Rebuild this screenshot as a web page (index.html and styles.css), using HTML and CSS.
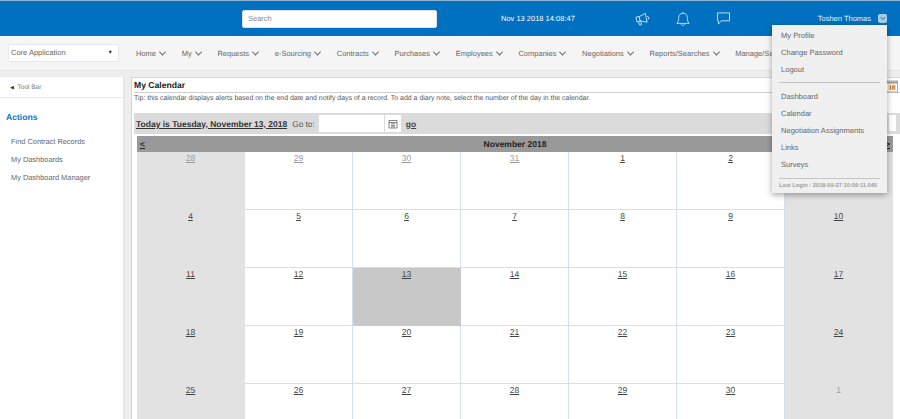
FILE: index.html
```html
<!DOCTYPE html>
<html lang="en">
<head>
<meta charset="utf-8">
<title>My Calendar</title>
<link rel="stylesheet" href="styles.css">
</head>
<body>
<header class="topbar">
  <div class="search">Search</div>
  <div class="clock">Nov 13 2018 14:08:47</div>
  <div class="top-icons">
    <svg class="ticon" width="15" height="14" viewBox="0 0 16 15"><path d="M1 5.5 L4.5 5 L11 1.5 L13 11 L6 9.5 L2 10.5 Z M4.5 5 L5.5 10 M3.5 10.3 L5 14 L7 13.6 L6 9.7 M13 4.5 L15 6 L14 8"/></svg>
    <svg class="ticon" width="14" height="16" viewBox="0 0 16 17"><path d="M1 13.5 C3 11.5 3 9.5 3 7 C3 3.8 5 2 8 2 C11 2 13 3.8 13 7 C13 9.5 13 11.5 15 13.5 Z M8 2 V0.5 M6 14 C6 16.5 10 16.5 10 14"/></svg>
    <svg class="ticon" width="15" height="13" viewBox="0 0 16 14"><path d="M1.5 1 H14.5 V9.5 H5.5 L2.5 13 V9.5 H1.5 Z"/></svg>
  </div>
  <div class="user">
    <span>Toshen Thomas</span>
    <span class="user-toggle"><svg width="8" height="6" viewBox="0 0 8 6"><path d="M1 1 L4 4.5 L7 1"/></svg></span>
  </div>
</header>

<nav class="navbar">
  <div class="app-select"><span>Core Application</span><span class="select-arrow">&#9660;</span></div>
  <ul class="menu">
    <li>Home</li>
    <li>My</li>
    <li>Requests</li>
    <li>e-Sourcing</li>
    <li>Contracts</li>
    <li>Purchases</li>
    <li>Employees</li>
    <li>Companies</li>
    <li>Negotiations</li>
    <li>Reports/Searches</li>
    <li class="cut">Manage/Se</li>
  </ul>
</nav>

<div class="body">
  <aside class="sidebar">
    <div class="toolbar"><span class="tool-arrow">&#9664;</span> Tool Bar</div>
    <h2 class="actions-title">Actions</h2>
    <ul class="actions">
      <li>Find Contract Records</li>
      <li>My Dashboards</li>
      <li>My Dashboard Manager</li>
    </ul>
  </aside>
  <main class="panel">
    <h1 class="panel-title">My Calendar</h1>
    <p class="tip">Tip: this calendar displays alerts based on the end date and notify days of a record. To add a diary note, select the number of the day in the calendar.</p>
    <div class="goto">
      <a class="today">Today is Tuesday, November 13, 2018</a>
      <span class="goto-label">Go to:</span>
      <span class="date-input"></span>
      <span class="date-btn"><svg width="10" height="10" viewBox="0 0 10 10"><path d="M1 1.5 H9 V9 H1 Z M1 3.5 H9 M3 4.8 H7 M3 6.3 H7 M3 7.8 H7"/></svg></span>
      <a class="go">go</a>
    </div>
    <div class="calendar">
      <div class="cal-head"><a>&lt;</a><span>November 2018</span><a>&gt;</a></div>
      <div class="cal-grid">
        <div class="day we"><a class="dim">28</a></div><div class="day"><a class="dim">29</a></div><div class="day"><a class="dim">30</a></div><div class="day"><a class="dim">31</a></div><div class="day"><a>1</a></div><div class="day"><a>2</a></div><div class="day we"><a>3</a></div>
        <div class="day we"><a>4</a></div><div class="day"><a>5</a></div><div class="day"><a>6</a></div><div class="day"><a>7</a></div><div class="day"><a>8</a></div><div class="day"><a>9</a></div><div class="day we"><a>10</a></div>
        <div class="day we"><a>11</a></div><div class="day"><a>12</a></div><div class="day today-cell"><a>13</a></div><div class="day"><a>14</a></div><div class="day"><a>15</a></div><div class="day"><a>16</a></div><div class="day we"><a>17</a></div>
        <div class="day we"><a>18</a></div><div class="day"><a>19</a></div><div class="day"><a>20</a></div><div class="day"><a>21</a></div><div class="day"><a>22</a></div><div class="day"><a>23</a></div><div class="day we"><a>24</a></div>
        <div class="day we"><a>25</a></div><div class="day"><a>26</a></div><div class="day"><a>27</a></div><div class="day"><a>28</a></div><div class="day"><a>29</a></div><div class="day"><a>30</a></div><div class="day we"><a class="dim plain">1</a></div>
      </div>
    </div>
  </main>
</div>

<svg class="corner-cal" width="12" height="13" viewBox="0 0 12 13"><rect x="0.5" y="1" width="11" height="11" fill="#fff" stroke="#aaa"/><rect x="1" y="1.5" width="10" height="2" fill="#999"/><rect x="2" y="4.5" width="8" height="6" fill="#f3d9b0"/><rect x="4" y="5.5" width="1" height="4" fill="#b07a3a"/><rect x="6" y="5.5" width="3" height="4" fill="#c99550"/></svg>
<div class="side-input"></div>

<div class="dropdown">
  <ul class="dd-list">
    <li>My Profile</li>
    <li>Change Password</li>
    <li>Logout</li>
  </ul>
  <hr class="dd-rule">
  <ul class="dd-list">
    <li>Dashboard</li>
    <li>Calendar</li>
    <li>Negotiation Assignments</li>
    <li>Links</li>
    <li>Surveys</li>
  </ul>
  <hr class="dd-rule dd-rule-last">
  <div class="last-login">Last Login : 2018-09-27 10:09:11.040</div>
</div>
</body>
</html>
```
FILE: styles.css
```css
* { box-sizing: border-box; }
html, body { margin: 0; padding: 0; height: 419px; overflow: hidden; }
body { position: relative; background: #eeeeee; font-family: "Liberation Sans", Arial, sans-serif; color: #666; text-rendering: geometricPrecision; }
ul { list-style: none; margin: 0; padding: 0; }

.topbar { height: 36px; border-top: 1px solid #8fb4d4; background: #0070c0; display: flex; align-items: center; color: #fff; font-size: 7.5px; }
.search { margin-left: 242px; width: 195px; height: 18px; background: #fff; border-radius: 2px; border: 1px solid #e0e0e0; color: #8a8a8a; font-size: 7.5px; line-height: 16px; padding-left: 5px; }
.clock { margin-left: 64px; width: 100px; }
.top-icons { margin-left: 34px; display: flex; align-items: center; gap: 26px; }
.ticon { fill: none; stroke: #cfe3f3; stroke-width: 1; }
.user { margin-left: auto; margin-right: 13px; display: flex; align-items: center; gap: 7px; color: #e6f0f8; }
.user-toggle { width: 9px; height: 9px; background: #a8cbe6; border-radius: 2px; display: flex; align-items: center; justify-content: center; }
.user-toggle svg { fill: none; stroke: #0070c0; stroke-width: 1.2; width: 6px; height: 5px; }

.navbar { height: 35px; background: #f5f5f5; border-bottom: 1px solid #e4e4e4; display: flex; align-items: center; white-space: nowrap; overflow: hidden; }
.app-select { margin-left: 8px; width: 111px; height: 18px; background: #fff; border: 1px solid #e8e8e8; border-radius: 2px; font-size: 7.5px; line-height: 16px; padding: 0 2px; color: #666; display: flex; justify-content: space-between; flex: none; }
.select-arrow { font-size: 5.5px; color: #333; margin-right: 3px; }
.menu { display: flex; margin-left: 17px; gap: 16.7px; font-size: 7.5px; color: #666; }
.menu li { display: flex; align-items: center; gap: 4px; }
.menu li::after { content: ""; width: 4px; height: 4px; border-right: 1px solid #555; border-bottom: 1px solid #555; transform: rotate(45deg) translate(-1px, -1px); }
.menu li.cut::after { display: none; }

.body { display: flex; gap: 6px; padding-top: 6px; height: 348px; }
.sidebar { width: 125px; flex: none; background: #fff; border-right: 2px solid #e6e6e6; }
.toolbar { height: 21px; background: #fff; border-bottom: 1px solid #e6e6e6; font-size: 6.5px; line-height: 21px; padding-left: 10px; color: #777; }
.tool-arrow { color: #333; font-size: 5px; margin-right: 2px; }
.actions-title { margin: 13px 0 0 6px; font-size: 8.6px; line-height: 12px; color: #0b78c2; font-weight: bold; }
.actions { margin: 10px 0 0 11px; font-size: 7.4px; color: #666; }
.actions li { height: 18px; line-height: 18px; }

.panel { flex: 1; min-width: 0; background: #fff; border-top: 1px solid #d6d6d6; border-left: 1px solid #d6d6d6; padding: 0 0 0 2px; overflow: hidden; }
.panel-title { margin: 0; height: 15px; font-size: 8.6px; line-height: 14px; font-weight: bold; color: #222; border-bottom: 1px solid #d0d0d0; white-space: nowrap; }
.tip { margin: 0; height: 20px; font-size: 6.94px; line-height: 12px; color: #555; white-space: nowrap; }
.goto { height: 21px; background: #dbdbdb; display: flex; align-items: center; white-space: nowrap; padding-left: 2px; }
.today { font-weight: bold; font-size: 8.5px; color: #333; text-decoration: underline; }
.goto-label { margin-left: 5px; color: #555; font-size: 8.3px; }
.date-input { margin-left: 4px; width: 65px; height: 17px; background: #fff; }
.date-btn { margin-left: 1px; width: 16px; height: 17px; background: #fff; display: flex; align-items: center; justify-content: center; }
.date-btn svg { fill: none; stroke: #666; stroke-width: 0.8; }
.go { margin-left: 5px; font-weight: bold; font-size: 8.5px; color: #444; text-decoration: underline; }

.calendar { margin: 2px 0 0 3px; width: 756px; }
.cal-head { height: 16px; background: #999; display: flex; justify-content: space-between; align-items: center; padding: 0 3px; font-size: 8.5px; font-weight: bold; color: #222; }
.cal-head a { text-decoration: underline; }
.cal-grid { display: grid; grid-template-columns: repeat(7, 108px); grid-auto-rows: 58px; }
.day { background: #fff; border-right: 1px solid #d3e0ee; border-bottom: 1px solid #d3e0ee; text-align: center; font-size: 8.5px; line-height: 13px; color: #444; }
.day a { text-decoration: underline; }
.day a.dim { color: #999; }
.day a.plain { text-decoration: none; }
.day.we { background: #e2e2e2; border-color: #e2e2e2; }
.day.today-cell { background: #c8c8c8; border-color: #c8c8c8; }

.corner-cal { position: absolute; left: 886px; top: 80px; }
.side-input { position: absolute; left: 887px; top: 113px; width: 11px; height: 20px; background: #fff; border: 2px solid #dcdcdc; }

.dropdown { position: absolute; left: 772px; top: 25px; width: 115px; height: 168px; background: #f0f0f0; box-shadow: 0 2px 6px rgba(0,0,0,.35); padding: 2px 7px 0 7px; }
.dd-list { padding-left: 2px; font-size: 7.55px; color: #666; }
.dd-list li { height: 17px; line-height: 17px; white-space: nowrap; }
.dd-rule { margin: 4px 0 5px; border: 0; border-top: 1px solid #c4c4c4; }
.dd-rule-last { margin-top: 5px; margin-bottom: 4px; }
.last-login { font-size: 5.7px; font-weight: bold; color: #a0a0a0; white-space: nowrap; margin-top: 1px; }
```
